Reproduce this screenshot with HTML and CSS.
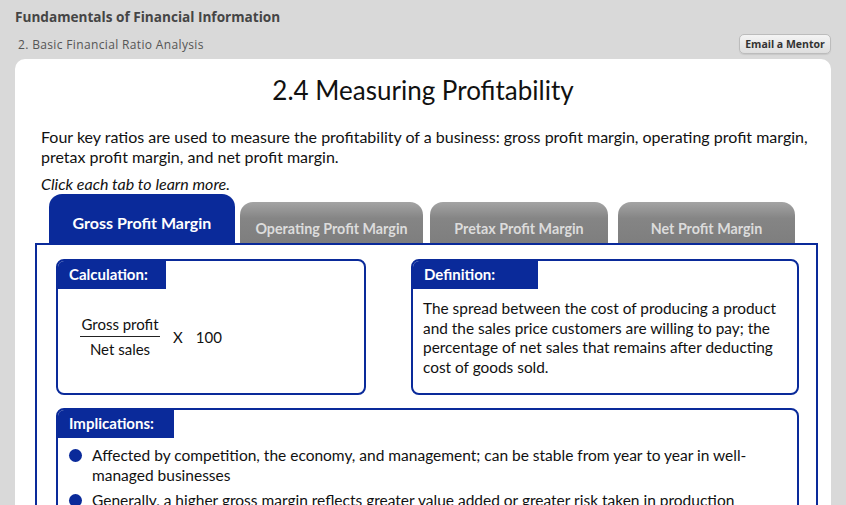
FILE: index.html
```html
<!DOCTYPE html>
<html>
<head>
<meta charset="utf-8">
<link rel="stylesheet" href="styles.css">
</head>
<body>
<div class="top">
  <div class="course">Fundamentals of Financial Information</div>
  <div class="subrow">
    <div class="module">2. Basic Financial Ratio Analysis</div>
    <button class="mentor">Email a Mentor</button>
  </div>
</div>
<div class="panel">
  <h1 class="heading">2.4 Measuring Profitability</h1>
  <p class="intro">Four key ratios are used to measure the profitability of a business: gross profit margin, operating profit margin, pretax profit margin, and net profit margin.</p>
  <p class="hint">Click each tab to learn more.</p>
  <div class="tabs">
    <div class="tab active t1">Gross Profit Margin</div>
    <div class="tab t2">Operating Profit Margin</div>
    <div class="tab t3">Pretax Profit Margin</div>
    <div class="tab t4">Net Profit Margin</div>
  </div>
  <div class="content">
    <div class="row">
      <div class="box calc">
        <div class="label l-calc">Calculation:</div>
        <div class="formula">
          <div class="frac">
            <div class="num">Gross profit</div>
            <div class="den">Net sales</div>
          </div>
          <div class="times">X</div>
          <div class="hundred">100</div>
        </div>
      </div>
      <div class="box def">
        <div class="label l-def">Definition:</div>
        <p class="deftext">The spread between the cost of producing a product and the sales price customers are willing to pay; the percentage of net sales that remains after deducting cost of goods sold.</p>
      </div>
    </div>
    <div class="box impl">
      <div class="label l-impl">Implications:</div>
      <ul class="bullets">
        <li>Affected by competition, the economy, and management; can be stable from year to year in well-managed businesses</li>
        <li>Generally, a higher gross margin reflects greater value added or greater risk taken in production</li>
      </ul>
    </div>
  </div>
</div>
</body>
</html>
```

FILE: styles.css
```css
* { box-sizing: border-box; }
html, body { margin: 0; padding: 0; }
body {
  background: #d9d9d9;
  font-family: "Lato", "Open Sans", sans-serif;
  width: 846px;
  height: 505px;
  overflow: hidden;
  color: #111;
}
.top { padding: 7px 15px 0 15px; height: 59px; }
.course {
  font-family: "Open Sans", sans-serif;
  font-weight: 700;
  font-size: 13.6px;
  color: #454545;
  line-height: 20px;
}
.subrow {
  display: flex;
  justify-content: space-between;
  align-items: center;
  margin-top: 7px;
}
.module {
  font-family: "Open Sans", sans-serif;
  font-size: 12px;
  color: #555;
  letter-spacing: 0.35px;
  padding-left: 3px;
}
.mentor {
  font-family: "Open Sans", sans-serif;
  font-weight: 700;
  font-size: 10.5px;
  color: #333;
  height: 20px;
  width: 92px;
  padding: 0;
  border: 1px solid #bcbcbc;
  border-radius: 5px;
  background: linear-gradient(#f4f4f4, #dedede);
  box-shadow: 0 1px 1px rgba(0,0,0,0.08);
}
.panel {
  margin: 0 15px;
  background: #fff;
  border-radius: 10px 10px 0 0;
  height: 446px;
  padding-top: 15px;
}
.heading {
  margin: 0;
  text-align: center;
  font-weight: 400;
  font-size: 26px;
  line-height: 32px;
  color: #111;
}
.intro {
  margin: 21px 0 0 0;
  padding: 0 10px 0 26px;
  font-size: 16px;
  line-height: 20px;
}
.hint {
  margin: 7px 0 0 0;
  padding-left: 26px;
  font-style: italic;
  font-size: 16px;
  line-height: 20px;
}
.tabs {
  display: flex;
  align-items: flex-end;
  margin-left: 34px;
  height: 49px;
  margin-top: 0;
}
.tab {
  border-radius: 13px 13px 0 0;
  display: flex;
  justify-content: center;
  align-items: center;
  font-weight: 700;
  height: 41px;
  font-size: 14.3px;
  color: #dcdcdc;
  background: linear-gradient(#a4a4a4, #858585 40%, #7e7e7e);
  padding-top: 11px;
}
.tab.active {
  height: 49px;
  background: #0a2a9a;
  color: #fff;
  font-size: 16px;
  padding-top: 8px;
  padding-bottom: 0;
}
.t1 { width: 186px; }
.t2 { width: 183px; margin-left: 5px; }
.t3 { width: 178px; margin-left: 7px; }
.t4 { width: 177px; margin-left: 10px; }
.content {
  margin: 0 13px 0 20px;
  border: 2px solid #0a2a9a;
  border-bottom: none;
  height: 300px;
  padding: 14px 17px 0 19px;
}
.row { display: flex; justify-content: space-between; }
.box {
  border: 2px solid #0a2a9a;
  border-radius: 8px;
  overflow: hidden;
  position: relative;
}
.calc { width: 310px; height: 136px; }
.def { width: 388px; height: 136px; }
.impl { margin-top: 13px; height: 120px; }
.label {
  background: #0a2a9a;
  color: #fff;
  font-weight: 700;
  font-size: 15px;
  height: 28px;
  line-height: 26px;
  padding-left: 11px;
}
.l-calc { width: 108px; }
.l-def { width: 125px; }
.l-impl { width: 116px; }
.formula {
  display: flex;
  align-items: center;
  padding: 26px 0 0 22px;
  font-size: 15px;
}
.frac { width: 80px; text-align: center; }
.num { padding-bottom: 3px; border-bottom: 1px solid #222; line-height: 18px; }
.den { padding-top: 3px; line-height: 18px; }
.times { margin-left: 13px; }
.hundred { margin-left: 13px; }
.deftext {
  margin: 10px 10px 0 10px;
  font-size: 15.4px;
  line-height: 19.6px;
}
.bullets {
  list-style: none;
  margin: 7px 0 0 0;
  padding: 0 20px 0 34px;
  font-size: 15.5px;
  line-height: 20px;
}
.bullets li { position: relative; margin-bottom: 5px; }
.bullets li::before {
  content: "";
  position: absolute;
  left: -23px;
  top: 4px;
  width: 13px;
  height: 13px;
  border-radius: 50%;
  background: #0a2a9a;
}
```
